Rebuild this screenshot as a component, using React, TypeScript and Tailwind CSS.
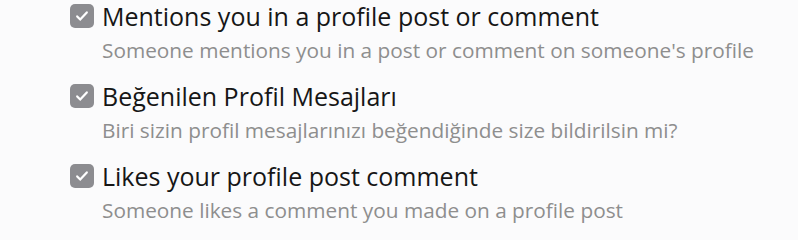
import React from "react";

const items = [
  {
    title: "Mentions you in a profile post or comment",
    desc: "Someone mentions you in a post or comment on someone's profile",
  },
  {
    title: "Beğenilen Profil Mesajları",
    desc: "Biri sizin profil mesajlarınızı beğendiğinde size bildirilsin mi?",
  },
  {
    title: "Likes your profile post comment",
    desc: "Someone likes a comment you made on a profile post",
  },
];

function CheckBox() {
  return (
    <span className="mt-[4px] flex h-[24px] w-[24px] shrink-0 items-center justify-center rounded-[5px] bg-[#8c8c90]">
      <svg viewBox="0 0 16 16" className="h-[16px] w-[16px]" fill="none">
        <path d="M3.2 8.4l3 3.2L12.8 4.4" stroke="#fff" strokeWidth="2.2" strokeLinecap="round" strokeLinejoin="round" />
      </svg>
    </span>
  );
}

export default function App() {
  return (
    <div className="h-[240px] w-full bg-[#fbfbfc] pl-[70px]" style={{ fontFamily: "'Open Sans', sans-serif" }}>
      <div className="flex flex-col">
        {items.map((it) => (
          <div key={it.title} className="flex h-[80px] gap-[8px]">
            <CheckBox />
            <div className="flex flex-col pt-[1px]">
              <div className="whitespace-nowrap text-[25px] leading-[30px] text-[#161616]">{it.title}</div>
              <div className="mt-[6px] whitespace-nowrap text-[20.8px] leading-[26px] text-[#8e8e8e]">{it.desc}</div>
            </div>
          </div>
        ))}
      </div>
    </div>
  );
}
